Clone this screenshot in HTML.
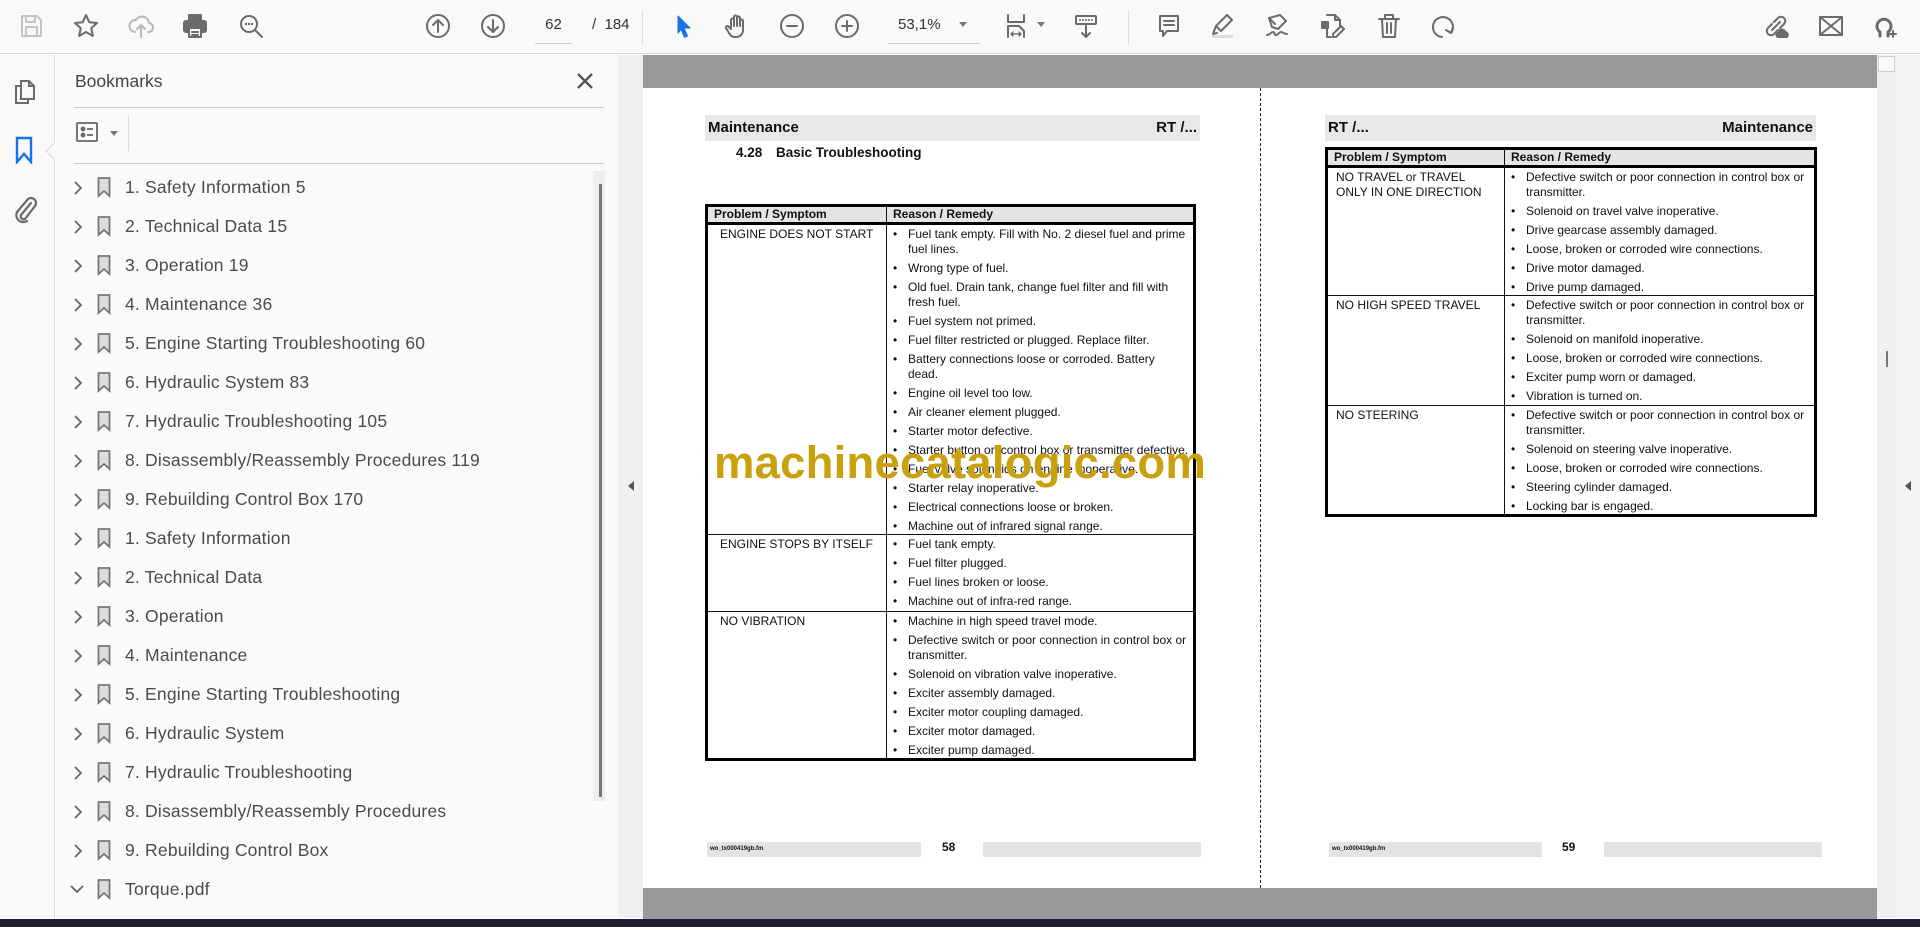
<!DOCTYPE html>
<html><head><meta charset="utf-8">
<style>
*{margin:0;padding:0;box-sizing:border-box}
body{width:1920px;height:927px;overflow:hidden;background:#fff;font-family:"Liberation Sans",Arial,sans-serif;position:relative}
.abs{position:absolute}
#tb{left:0;top:0;width:1920px;height:54px;background:#f9f9f9;border-bottom:1px solid #d6d6d6}
.ic{position:absolute;top:12px;width:28px;height:28px}
.ic svg{width:28px;height:28px;fill:none;stroke:#6b6b6b;stroke-width:2;stroke-linecap:round;stroke-linejoin:round}
#rail{left:0;top:55px;width:55px;height:863px;background:#f9f9f9;border-right:1px solid #d9d9d9}
#side{left:56px;top:55px;width:562px;height:863px;background:#fafafa}
.bm{position:absolute;left:0;height:39px;width:540px;font-size:17.5px;letter-spacing:0.2px;color:#4b4b4b;line-height:39px}
.bm .t{position:absolute;left:69px;top:0}
.bm svg{position:absolute}
#doc{left:643px;top:55px;width:1234px;height:863px;background:#fff}
.band{position:absolute;left:643px;width:1234px;background:#999}
.hdr{position:absolute;height:26px;background:#e8e8e8;font-weight:bold;font-size:15px;line-height:26px;color:#111;padding:0 3px}
table{position:absolute;border-collapse:collapse;border:3px solid #000;font-size:12px;color:#111;table-layout:fixed}
td,th{border:1.3px solid #111;vertical-align:top;text-align:left}
th{background:#e4e4e4;font-weight:bold;font-size:12px;line-height:15px;padding:0 6px;border-bottom:3px solid #000}
td.s{padding:2px 0 0 12px;line-height:14.7px}
td.r{padding:2px 4px 0 0}
ul{list-style:none}
li{position:relative;padding-left:21px;line-height:14.7px;margin-bottom:4.4px}
li:last-child{margin-bottom:0}
li:before{content:"•";position:absolute;left:6px;top:0}
.ft{position:absolute;top:842px;height:15px;background:#e3e3e3}
</style></head><body>

<div id="tb" class="abs">
 <div class="ic" style="left:17px"><svg viewBox="0 0 28 28" style="stroke:#c4c4c4"><path d="M5 4h15l4 4v16H5z"/><path d="M9 4v6h9V4"/><rect x="9" y="15" width="11" height="9"/></svg></div>
 <div class="ic" style="left:72px"><svg viewBox="0 0 28 28"><path d="M14 3l3.3 7.2 7.7.8-5.8 5.2 1.7 7.8L14 20l-6.9 4 1.7-7.8L3 11l7.7-.8z"/></svg></div>
 <div class="ic" style="left:127px"><svg viewBox="0 0 28 28" style="stroke:#b8b8b8"><path d="M8 20a6 6 0 0 1 1-12 7 7 0 0 1 13 3 4.5 4.5 0 0 1-1 9"/><path d="M14 25V13M10 17l4-4 4 4"/></svg></div>
 <div class="ic" style="left:181px"><svg viewBox="0 0 28 28"><rect x="8" y="3" width="12" height="6" fill="#6b6b6b"/><rect x="3" y="9" width="22" height="11" rx="2" fill="#6b6b6b"/><rect x="8" y="16" width="12" height="9" fill="#fff"/><path d="M11 20h6M11 23h6"/></svg></div>
 <div class="ic" style="left:237px"><svg viewBox="0 0 28 28"><circle cx="12" cy="12" r="8"/><path d="M18 18l7 7"/><path d="M9 12h0M12 12h0M15 12h0" stroke-width="2.4"/></svg></div>
 <div class="ic" style="left:424px"><svg viewBox="0 0 28 28"><circle cx="14" cy="14" r="11"/><path d="M14 20V8M9 13l5-5 5 5"/></svg></div>
 <div class="ic" style="left:479px"><svg viewBox="0 0 28 28"><circle cx="14" cy="14" r="11"/><path d="M14 8v12M9 15l5 5 5-5"/></svg></div>
 <div class="abs" style="left:535px;top:16px;width:37px;height:28px;border-bottom:1px solid #cfcfcf;font-size:15px;color:#333;text-align:center">62</div>
 <div class="abs" style="left:592px;top:16px;font-size:15px;color:#333">/&nbsp; 184</div>
 <div class="abs" style="left:642px;top:10px;width:1px;height:35px;background:#ddd"></div>
 <div class="ic" style="left:670px"><svg viewBox="0 0 28 28"><path d="M8 4l12 12h-6l3.5 8-3 1.3-3.5-8L8 21z" fill="#1473e6" stroke="#1473e6" stroke-width="1"/></svg></div>
 <div class="ic" style="left:723px"><svg viewBox="0 0 28 28"><path d="M8 15V8a1.5 1.5 0 0 1 3 0v6V5a1.5 1.5 0 0 1 3 0v9V6a1.5 1.5 0 0 1 3 0v8V9a1.5 1.5 0 0 1 3 0v9c0 4-3 7-7 7h-1c-3 0-5-2-6-4l-3-5a1.5 1.5 0 0 1 2.5-1.5L8 17"/></svg></div>
 <div class="ic" style="left:778px"><svg viewBox="0 0 28 28"><circle cx="14" cy="14" r="11"/><path d="M9 14h10"/></svg></div>
 <div class="ic" style="left:833px"><svg viewBox="0 0 28 28"><circle cx="14" cy="14" r="11"/><path d="M9 14h10M14 9v10"/></svg></div>
 <div class="abs" style="left:888px;top:16px;width:92px;height:28px;border-bottom:1px solid #cfcfcf;font-size:15px;color:#333;padding-left:10px">53,1%</div>
 <div class="abs" style="left:959px;top:22px;width:0;height:0;border-left:4px solid transparent;border-right:4px solid transparent;border-top:5px solid #777"></div>
 <div class="ic" style="left:1002px"><svg viewBox="0 0 28 28"><path d="M6 3v7h16V3"/><path d="M6 25V14h11l5 5v6"/><path d="M9 22h10M9 22l2-2M9 22l2 2M19 22l-2-2M19 22l-2 2" stroke-width="1.4"/></svg></div>
 <div class="abs" style="left:1037px;top:22px;width:0;height:0;border-left:4px solid transparent;border-right:4px solid transparent;border-top:5px solid #777"></div>
 <div class="ic" style="left:1072px"><svg viewBox="0 0 28 28"><rect x="4" y="4" width="20" height="8" rx="1"/><path d="M8 8h0M11 8h0M14 8h0M17 8h0M20 8h0"/><path d="M14 14v11M10 21l4 4 4-4"/></svg></div>
 <div class="abs" style="left:1128px;top:10px;width:1px;height:35px;background:#ddd"></div>
 <div class="ic" style="left:1155px"><svg viewBox="0 0 28 28"><path d="M5 4h18v15H12l-4 5v-5H5z"/><path d="M9 9h10M9 13h10"/></svg></div>
 <div class="ic" style="left:1208px"><svg viewBox="0 0 28 28"><path d="M19 3l5 5-11 11-5-5z"/><path d="M8 14l-3 8 4-1"/><rect x="4" y="23" width="21" height="3" fill="#ddd" stroke="none"/></svg></div>
 <div class="ic" style="left:1263px"><svg viewBox="0 0 28 28"><path d="M17 3l6 6-8 8-6-2-3-9z"/><path d="M6 6l6 6"/><path d="M4 23c3 0 4-3 6-3s1 3 3 3 3-3 5-3 2 2 6 2"/></svg></div>
 <div class="ic" style="left:1319px"><svg viewBox="0 0 28 28"><path d="M8 3h8l5 5v6"/><path d="M16 3v5h5"/><rect x="3" y="10" width="6" height="6" fill="#6b6b6b"/><path d="M8 17v8h4"/><path d="M22 14l3 3-8 8h-3v-3z"/></svg></div>
 <div class="ic" style="left:1375px"><svg viewBox="0 0 28 28"><path d="M4 7h20M10 7V3h8v4M7 7l1 18h12l1-18M12 11v10M16 11v10"/></svg></div>
 <div class="ic" style="left:1430px"><svg viewBox="0 0 28 28"><path d="M12 25a10 10 0 1 1 9-4"/><path d="M23 15l-2 6-5-3"/></svg></div>
 <div class="ic" style="left:1762px"><svg viewBox="0 0 28 28"><path d="M12 10l4-4a4 4 0 0 1 6 6l-4 4M16 18l-4 4a4 4 0 0 1-6-6l4-4M10 18l8-8"/><path d="M16 25h9a3 3 0 0 0-2-5 3 3 0 0 0-6 1 2 2 0 0 0-1 4z" fill="#6b6b6b"/></svg></div>
 <div class="ic" style="left:1817px"><svg viewBox="0 0 28 28"><rect x="3" y="5" width="22" height="18"/><path d="M3 5l22 18M25 5L3 23"/></svg></div>
 <div class="ic" style="left:1872px"><svg viewBox="0 0 28 28"><path d="M8 24v-4a7 7 0 1 1 8 0v4" stroke-width="3"/><path d="M21 19v6M18 22h6"/></svg></div>
</div>

<div id="rail" class="abs">
 <svg class="abs" style="left:13px;top:23px" width="24" height="28" viewBox="0 0 24 28" fill="none" stroke="#6b6b6b" stroke-width="2"><path d="M8 3h8l5 5v13H8z"/><path d="M16 3v5h5"/><path d="M8 8H3v17h12v-4"/></svg>
 <svg class="abs" style="left:15px;top:81px" width="18" height="28" viewBox="0 0 18 28" fill="none" stroke="#1473e6" stroke-width="2.4"><path d="M2 2h14v24l-7-8-7 8z"/></svg>
 <svg class="abs" style="left:12px;top:139px" width="26" height="30" viewBox="0 0 26 30" fill="none" stroke="#6b6b6b" stroke-width="2.2" stroke-linecap="round"><path d="M19 9L9 21a3 3 0 0 0 4 4l10-13a5 5 0 0 0-7-7L5 18a7 7 0 0 0 10 9"/></svg>
 <div class="abs" style="left:48px;top:90px;width:12px;height:12px;background:#fafafa;border-left:1px solid #d9d9d9;border-bottom:1px solid #d9d9d9;transform:rotate(45deg)"></div>
</div>

<div id="side" class="abs">
 <div class="abs" style="left:19px;top:16px;font-size:17.5px;color:#444">Bookmarks</div>
 <svg class="abs" style="left:520px;top:17px" width="18" height="18" viewBox="0 0 18 18" stroke="#555" stroke-width="2.4"><path d="M2 2l14 14M16 2L2 16"/></svg>
 <div class="abs" style="left:18px;top:52px;width:530px;height:1px;background:#cfcfcf"></div>
 <svg class="abs" style="left:20px;top:66px" width="22" height="22" viewBox="0 0 22 22" fill="none" stroke="#666" stroke-width="1.8"><rect x="1" y="2" width="20" height="18" rx="1"/><circle cx="7" cy="8" r="1.5" fill="#666"/><circle cx="7" cy="14" r="1.5" fill="#666"/><path d="M11 8h6M11 14h6"/></svg>
 <div class="abs" style="left:54px;top:76px;border-left:4px solid transparent;border-right:4px solid transparent;border-top:5px solid #777"></div>
 <div class="abs" style="left:72px;top:61px;width:1px;height:35px;background:#ddd"></div>
 <div class="abs" style="left:18px;top:108px;width:530px;height:1px;background:#cfcfcf"></div>
 <div class="abs" style="left:537px;top:116px;width:12px;height:630px;background:#eeeeee"></div>
 <div class="abs" style="left:543px;top:129px;width:3px;height:613px;background:#777"></div>
</div>

<div class="abs" style="left:618px;top:55px;width:25px;height:863px;background:#f0f0f0"></div>
<div class="abs" style="left:628px;top:481px;border-top:5px solid transparent;border-bottom:5px solid transparent;border-right:6px solid #555"></div>

<div id="doc" class="abs"></div>
<div class="band" style="top:55px;height:33px"></div>
<div class="band" style="top:888px;height:31px"></div>
<div class="abs" style="left:0;top:919px;width:1920px;height:8px;background:#1e2133"></div>
<div class="abs" style="left:1877px;top:55px;width:19px;height:863px;background:#f0f0f0"></div>
<div class="abs" style="left:1878px;top:56px;width:17px;height:16px;background:#fafafa;border:1px solid #ccc"></div>
<div class="abs" style="left:1886px;top:351px;width:2px;height:16px;background:#777"></div>
<div class="abs" style="left:1896px;top:55px;width:24px;height:863px;background:#f4f4f4"></div>
<div class="abs" style="left:1905px;top:481px;border-top:5px solid transparent;border-bottom:5px solid transparent;border-right:6px solid #555"></div>
<div class="abs" style="left:1260px;top:88px;height:800px;border-left:1.5px dashed #222"></div>

<!-- left page -->
<div class="hdr" style="left:705px;top:115px;width:495px"><span>Maintenance</span><span style="float:right">RT /...</span></div>
<div class="abs" style="left:736px;top:145px;font-weight:bold;font-size:13.5px;color:#111">4.28</div>
<div class="abs" style="left:776px;top:145px;font-weight:bold;font-size:13.5px;color:#111">Basic Troubleshooting</div>
<table style="left:705px;top:204px;width:491px">
<colgroup><col style="width:180px"><col></colgroup>
<tr><th>Problem / Symptom</th><th>Reason / Remedy</th></tr>
<tr style="height:311px"><td class="s">ENGINE DOES NOT START</td><td class="r"><ul>
<li>Fuel tank empty. Fill with No. 2 diesel fuel and prime fuel lines.</li>
<li>Wrong type of fuel.</li>
<li>Old fuel. Drain tank, change fuel filter and fill with fresh fuel.</li>
<li>Fuel system not primed.</li>
<li>Fuel filter restricted or plugged. Replace filter.</li>
<li>Battery connections loose or corroded. Battery<br>dead.</li>
<li>Engine oil level too low.</li>
<li>Air cleaner element plugged.</li>
<li>Starter motor defective.</li>
<li>Starter button on control box or transmitter defective.</li>
<li>Fuel valve solenoids on engine inoperative.</li>
<li>Starter relay inoperative.</li>
<li>Electrical connections loose or broken.</li>
<li>Machine out of infrared signal range.</li></ul></td></tr>
<tr style="height:77px"><td class="s">ENGINE STOPS BY ITSELF</td><td class="r"><ul>
<li>Fuel tank empty.</li><li>Fuel filter plugged.</li><li>Fuel lines broken or loose.</li><li>Machine out of infra-red range.</li></ul></td></tr>
<tr style="height:145px"><td class="s">NO VIBRATION</td><td class="r"><ul>
<li>Machine in high speed travel mode.</li>
<li>Defective switch or poor connection in control box or transmitter.</li>
<li>Solenoid on vibration valve inoperative.</li>
<li>Exciter assembly damaged.</li>
<li>Exciter motor coupling damaged.</li>
<li>Exciter motor damaged.</li>
<li>Exciter pump damaged.</li></ul></td></tr>
</table>
<div class="abs" style="left:714px;top:437px;font-size:45.5px;font-weight:bold;color:#c9a00e;white-space:nowrap;letter-spacing:0.2px">machinecatalogic.com</div>
<div class="ft" style="left:707px;width:214px"></div>
<div class="abs" style="left:710px;top:846px;font-size:6px;font-weight:bold;color:#111">wo_tx000419gb.fm</div>
<div class="abs" style="left:942px;top:840px;font-size:12px;font-weight:bold;color:#111">58</div>
<div class="ft" style="left:983px;width:218px"></div>

<!-- right page -->
<div class="hdr" style="left:1325px;top:115px;width:491px"><span>RT /...</span><span style="float:right">Maintenance</span></div>
<table style="left:1325px;top:147px;width:492px">
<colgroup><col style="width:178px"><col></colgroup>
<tr><th>Problem / Symptom</th><th>Reason / Remedy</th></tr>
<tr style="height:126px"><td class="s" style="padding-left:8px">NO TRAVEL or TRAVEL<br>ONLY IN ONE DIRECTION</td><td class="r"><ul>
<li>Defective switch or poor connection in control box or transmitter.</li>
<li>Solenoid on travel valve inoperative.</li>
<li>Drive gearcase assembly damaged.</li>
<li>Loose, broken or corroded wire connections.</li>
<li>Drive motor damaged.</li>
<li>Drive pump damaged.</li></ul></td></tr>
<tr style="height:110px"><td class="s" style="padding-left:8px">NO HIGH SPEED TRAVEL</td><td class="r"><ul>
<li>Defective switch or poor connection in control box or transmitter.</li>
<li>Solenoid on manifold inoperative.</li>
<li>Loose, broken or corroded wire connections.</li>
<li>Exciter pump worn or damaged.</li>
<li>Vibration is turned on.</li></ul></td></tr>
<tr style="height:108px"><td class="s" style="padding-left:8px">NO STEERING</td><td class="r"><ul>
<li>Defective switch or poor connection in control box or transmitter.</li>
<li>Solenoid on steering valve inoperative.</li>
<li>Loose, broken or corroded wire connections.</li>
<li>Steering cylinder damaged.</li>
<li>Locking bar is engaged.</li></ul></td></tr>
</table>
<div class="ft" style="left:1329px;width:213px"></div>
<div class="abs" style="left:1332px;top:846px;font-size:6px;font-weight:bold;color:#111">wo_tx000419gb.fm</div>
<div class="abs" style="left:1562px;top:840px;font-size:12px;font-weight:bold;color:#111">59</div>
<div class="ft" style="left:1604px;width:218px"></div>

<div id="bl" class="abs" style="left:56px;top:55px"></div>
<script>
var n=["1. Safety Information 5","2. Technical Data 15","3. Operation 19","4. Maintenance 36","5. Engine Starting Troubleshooting 60","6. Hydraulic System 83","7. Hydraulic Troubleshooting 105","8. Disassembly/Reassembly Procedures 119","9. Rebuilding Control Box 170","1. Safety Information","2. Technical Data","3. Operation","4. Maintenance","5. Engine Starting Troubleshooting","6. Hydraulic System","7. Hydraulic Troubleshooting","8. Disassembly/Reassembly Procedures","9. Rebuilding Control Box","Torque.pdf"];
var h='';
n.forEach(function(t,i){var last=i==18;
h+='<div class="bm" style="top:'+(113+i*39)+'px">'+(last?'<svg style="left:14px;top:15px" width="14" height="9" viewBox="0 0 14 9" fill="none" stroke="#666" stroke-width="1.8"><path d="M1 1l6 6 6-6"/></svg>':'<svg style="left:17px;top:13px" width="9" height="14" viewBox="0 0 9 14" fill="none" stroke="#666" stroke-width="1.8"><path d="M2 1l6 6-6 6"/></svg>')+'<svg style="left:41px;top:9px" width="14" height="21" viewBox="0 0 14 21" fill="#ddd" stroke="#777" stroke-width="1.8"><path d="M1.5 1h11v18l-5.5-5-5.5 5z"/></svg><span class="t">'+t+'</span></div>';});
document.getElementById('bl').innerHTML=h;
</script>
</body></html>
